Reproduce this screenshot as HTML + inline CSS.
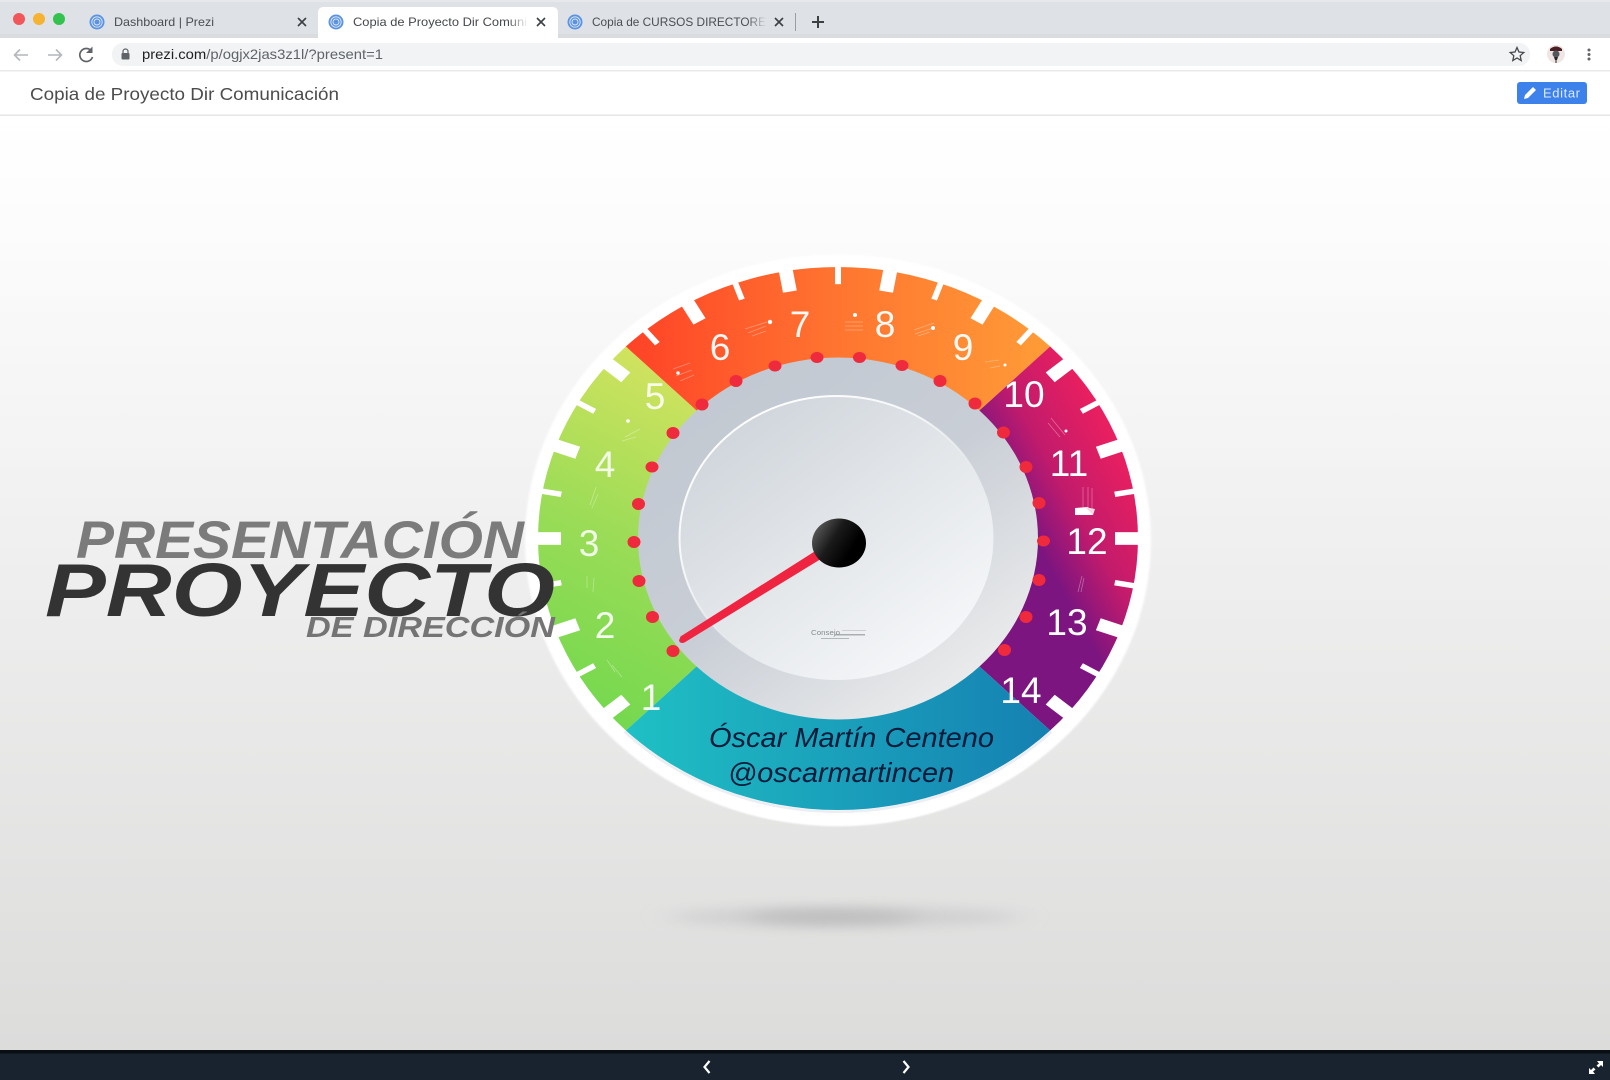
<!DOCTYPE html>
<html lang="es"><head><meta charset="utf-8"><title>Copia de Proyecto Dir Comunicación</title>
<style>html,body{margin:0;padding:0;width:1610px;height:1080px;overflow:hidden;background:#fff}svg{display:block}text{font-family:"Liberation Sans",sans-serif}</style>
</head><body>
<svg width="1610" height="1080" viewBox="0 0 1610 1080" xmlns="http://www.w3.org/2000/svg">
<defs>
<linearGradient id="bg" x1="0" y1="0" x2="0" y2="1"><stop offset="0" stop-color="#fff"/><stop offset=".12" stop-color="#fcfcfc"/><stop offset=".5" stop-color="#eeeeee"/><stop offset="1" stop-color="#dcdcdb"/></linearGradient>
<linearGradient id="gr" x1=".6" y1="0" x2=".4" y2="1"><stop offset="0" stop-color="#d2e35f"/><stop offset=".5" stop-color="#9bdc57"/><stop offset="1" stop-color="#72d84e"/></linearGradient>
<linearGradient id="or" x1="0" y1="0" x2="1" y2="0"><stop offset="0" stop-color="#ff4227"/><stop offset=".5" stop-color="#ff7530"/><stop offset="1" stop-color="#ff9c37"/></linearGradient>
<linearGradient id="mg" gradientUnits="userSpaceOnUse" x1="299" y1="-61" x2="192" y2="-8"><stop offset="0" stop-color="#e81f60"/><stop offset=".565" stop-color="#c21b6c"/><stop offset="1" stop-color="#7d1580"/></linearGradient>
<linearGradient id="bl" x1="0" y1="0" x2="1" y2="0"><stop offset="0" stop-color="#1fc0c4"/><stop offset="1" stop-color="#1580b2"/></linearGradient>
<linearGradient id="ring" x1=".1" y1=".1" x2=".8" y2=".95"><stop offset="0" stop-color="#c1c8d1"/><stop offset=".5" stop-color="#c9ced6"/><stop offset="1" stop-color="#eceded"/></linearGradient>
<linearGradient id="face" x1=".1" y1=".05" x2=".85" y2=".95"><stop offset="0" stop-color="#cdd3da"/><stop offset=".55" stop-color="#e5e8eb"/><stop offset="1" stop-color="#f6f8fa"/></linearGradient>
<linearGradient id="edge" x1=".1" y1=".1" x2=".6" y2=".75"><stop offset="0" stop-color="#fff"/><stop offset=".45" stop-color="#fff" stop-opacity=".8"/><stop offset=".85" stop-color="#fff" stop-opacity="0"/></linearGradient>
<linearGradient id="hub" x1=".05" y1=".2" x2=".75" y2=".6"><stop offset="0" stop-color="#5a5a5a"/><stop offset=".5" stop-color="#1a1a1a"/><stop offset="1" stop-color="#000"/></linearGradient>
<linearGradient id="fade" x1="0" y1="0" x2="1" y2="0"><stop offset="0" stop-color="#fff" stop-opacity="0"/><stop offset="1" stop-color="#fff"/></linearGradient>
<linearGradient id="fade2" x1="0" y1="0" x2="1" y2="0"><stop offset="0" stop-color="#dee1e6" stop-opacity="0"/><stop offset="1" stop-color="#dee1e6"/></linearGradient>
<filter id="b1" x="-5%" y="-5%" width="110%" height="110%"><feGaussianBlur stdDeviation="1"/></filter>
<filter id="b8" x="-30%" y="-200%" width="160%" height="500%"><feGaussianBlur stdDeviation="14 6"/></filter>
<g id="fav"><circle r="7.5" fill="#5b93e2"/><circle r="5.2" fill="none" stroke="#dbe7f8" stroke-width=".9"/><circle r="3" fill="none" stroke="#dbe7f8" stroke-width=".9"/></g>
</defs>

<!-- page background -->
<rect x="0" y="116" width="1610" height="934" fill="url(#bg)"/>

<!-- floor shadow -->
<ellipse cx="845" cy="917" rx="175" ry="10" fill="#d0d0d0" filter="url(#b8)"/>
<ellipse cx="832" cy="917" rx="85" ry="7" fill="#bdbdbd" filter="url(#b8)"/>

<!-- gauge -->
<g transform="translate(838 538.5) scale(1 .905)">
  <ellipse cy="2" rx="313" ry="316" fill="#fff" filter="url(#b1)"/>
  <path d="M212.13 212.13A300 300 0 0 1-212.13 212.13" fill="none" stroke="#d9dde8" stroke-width="3" opacity=".5" transform="scale(1.006)"/>
  <circle r="205" fill="url(#ring)"/>
  <path d="M-212.13-212.13A300 300 0 0 0-212.13 212.13L-141.42 141.42A200 200 0 0 1-141.42-141.42Z" fill="url(#gr)"/>
  <path d="M-212.13-212.13A300 300 0 0 1 212.13-212.13L141.42-141.42A200 200 0 0 0-141.42-141.42Z" fill="url(#or)"/>
  <path d="M212.13-212.13A300 300 0 0 1 212.13 212.13L141.42 141.42A200 200 0 0 0 141.42-141.42Z" fill="url(#mg)"/>
  <path d="M212.13 212.13A300 300 0 0 1-212.13 212.13L-141.42 141.42A200 200 0 0 0 141.42 141.42Z" fill="url(#bl)"/>
  <g fill="#fff">
    <rect x="-304" y="-7" width="27" height="14" transform="rotate(-40)"/>
    <rect x="-304" y="-3" width="23" height="6" transform="rotate(-30)"/>
    <rect x="-304" y="-7" width="27" height="14" transform="rotate(-20)"/>
    <rect x="-304" y="-3" width="23" height="6" transform="rotate(-10)"/>
    <rect x="-304" y="-7" width="27" height="14" transform="rotate(0)"/>
    <rect x="-304" y="-3" width="23" height="6" transform="rotate(10)"/>
    <rect x="-304" y="-7" width="27" height="14" transform="rotate(20)"/>
    <rect x="-304" y="-3" width="23" height="6" transform="rotate(30)"/>
    <rect x="-304" y="-7" width="27" height="14" transform="rotate(40)"/>
    <rect x="-304" y="-3" width="23" height="6" transform="rotate(50)"/>
    <rect x="-304" y="-7" width="27" height="14" transform="rotate(60)"/>
    <rect x="-304" y="-3" width="23" height="6" transform="rotate(70)"/>
    <rect x="-304" y="-7" width="27" height="14" transform="rotate(80)"/>
    <rect x="-304" y="-3" width="23" height="6" transform="rotate(90)"/>
    <rect x="-304" y="-7" width="27" height="14" transform="rotate(100)"/>
    <rect x="-304" y="-3" width="23" height="6" transform="rotate(110)"/>
    <rect x="-304" y="-7" width="27" height="14" transform="rotate(120)"/>
    <rect x="-304" y="-3" width="23" height="6" transform="rotate(130)"/>
    <rect x="-304" y="-7" width="27" height="14" transform="rotate(140)"/>
    <rect x="-304" y="-3" width="23" height="6" transform="rotate(150)"/>
    <rect x="-304" y="-7" width="27" height="14" transform="rotate(160)"/>
    <rect x="-304" y="-3" width="23" height="6" transform="rotate(170)"/>
    <rect x="-304" y="-7" width="27" height="14" transform="rotate(180)"/>
    <rect x="-304" y="-3" width="23" height="6" transform="rotate(190)"/>
    <rect x="-304" y="-7" width="27" height="14" transform="rotate(200)"/>
    <rect x="-304" y="-3" width="23" height="6" transform="rotate(210)"/>
    <rect x="-304" y="-7" width="27" height="14" transform="rotate(220)"/>
  </g>
</g>

<!-- inner face -->
<ellipse cx="836.5" cy="538" rx="157" ry="142" fill="url(#face)"/>
<ellipse cx="836.5" cy="538" rx="157" ry="142" fill="none" stroke="url(#edge)" stroke-width="2"/>

<!-- red dots -->
<g fill="#ee2a3c">
<ellipse cx="634" cy="542" rx="6.5" ry="6"/><ellipse cx="638.5" cy="504" rx="6.5" ry="6"/><ellipse cx="652" cy="467" rx="6.5" ry="5.5"/><ellipse cx="673" cy="433" rx="6.5" ry="6"/><ellipse cx="702" cy="404.5" rx="6.5" ry="6"/><ellipse cx="736" cy="381" rx="6.5" ry="6"/><ellipse cx="775" cy="366" rx="6.5" ry="5.5"/><ellipse cx="817" cy="357.5" rx="6.5" ry="5.5"/>
<ellipse cx="859.5" cy="357.5" rx="6.5" ry="5.5"/><ellipse cx="902" cy="365.5" rx="6.5" ry="5.5"/><ellipse cx="940" cy="381" rx="6.5" ry="6"/><ellipse cx="975" cy="403.5" rx="6.5" ry="6"/><ellipse cx="1003.5" cy="432.5" rx="6.5" ry="6"/><ellipse cx="1026" cy="467" rx="6.5" ry="6"/><ellipse cx="1039" cy="503" rx="6.5" ry="6"/><ellipse cx="1043.5" cy="541" rx="6.5" ry="5.5"/>
<ellipse cx="1039" cy="580" rx="6.5" ry="6"/><ellipse cx="1026" cy="617" rx="6.5" ry="6"/><ellipse cx="1004.5" cy="650" rx="6.5" ry="6"/>
<ellipse cx="639" cy="581" rx="6.5" ry="6"/><ellipse cx="652.5" cy="617" rx="6.5" ry="6"/><ellipse cx="673" cy="651" rx="6.5" ry="6"/>
</g>

<!-- tiny marks on the bands -->
<g fill="none" stroke="#fff" stroke-width=".8" opacity=".35">
<path d="M673 369l17-6M676 376l16-6M680 381l14-6M745 329l22-7M748 333l18-7M752 336l14-5M845 322l18 0M845 326l18 0M845 330l18 0M914 330l20-7M915 334l18-6M918 336l12-4M985 362l14-2M990 368l10-2M625 437l15-8M622 441l14-4M590 505l6-18M592 508l6-14M1051 418l14 17M1048 423l12 14M1083 487l0 24M1088 487l0 24M1092 488l0 22M1078 592l4-16M1081 592l3-14M607 660l8 12M612 665l10 12M587 588l0-12M593 592l1-14"/>
</g>
<g fill="#fff">
<circle cx="770" cy="322" r="2.2"/><circle cx="855" cy="315" r="2"/><circle cx="933" cy="328" r="2"/><circle cx="1005" cy="365" r="1.5"/><circle cx="628" cy="421" r="1.8"/>
<circle cx="678" cy="373" r="1.7"/><circle cx="1066" cy="431" r="1.5"/>
<path d="M1075 508l13-1 5 8-18 0z"/>
<path d="M1085 507l8 8 2-6z" fill="#f7d7e4"/>
</g>

<!-- needle -->
<path d="M680.5 636.5L824 545.5 829 554 684.5 642.5Q680 644 679 640.5Z" fill="#ef2440"/>

<!-- hub -->
<ellipse cx="839" cy="543" rx="27" ry="24.5" fill="url(#hub)"/>

<!-- tiny logo -->
<g fill="#8e9297">
<text x="811" y="635" font-size="7.5" textLength="29" lengthAdjust="spacingAndGlyphs" fill="#868a8f">Consejo</text>
<rect x="842" y="630" width="24" height="1" opacity=".35"/>
<rect x="835" y="634" width="30" height="1.5" opacity=".7"/>
<rect x="821" y="638" width="28" height="1" opacity=".6"/>
</g>

<!-- gauge numbers -->
<g font-size="37" fill="#fff" text-anchor="middle">
<text x="651" y="710" fill-opacity=".92">1</text>
<text x="605" y="638" fill-opacity=".9">2</text>
<text x="589" y="556" fill-opacity=".85">3</text>
<text x="605" y="477" fill-opacity=".85">4</text>
<text x="655" y="409" fill-opacity=".85">5</text>
<text x="720" y="360" fill-opacity=".95">6</text>
<text x="800" y="337" fill-opacity=".95">7</text>
<text x="885" y="337" fill-opacity=".95">8</text>
<text x="963" y="360" fill-opacity=".95">9</text>
<text x="1024" y="407">10</text>
<text x="1069" y="476">11</text>
<text x="1087" y="554">12</text>
<text x="1067" y="635">13</text>
<text x="1021" y="703">14</text>
</g>

<!-- name -->
<g font-style="italic" fill="#001c3a" font-size="27.5">
<text x="709" y="747" textLength="285" lengthAdjust="spacingAndGlyphs">Óscar Martín Centeno</text>
<text x="728" y="782" textLength="226" lengthAdjust="spacingAndGlyphs">@oscarmartincen</text>
</g>

<!-- title -->
<g font-weight="700" font-style="italic">
<text x="76" y="558" font-size="53" fill="#7b7b7b" textLength="448" lengthAdjust="spacingAndGlyphs">PRESENTACIÓN</text>
<text x="45" y="616" font-size="75" fill="#333333" textLength="510" lengthAdjust="spacingAndGlyphs">PROYECTO</text>
<text x="306" y="637" font-size="29" fill="#747474" textLength="249" lengthAdjust="spacingAndGlyphs">DE DIRECCIÓN</text>
</g>

<!-- browser chrome -->
<rect width="1610" height="38" fill="#dee1e6"/>
<rect y="34" width="1610" height="4" fill="#d9dbdf"/>
<rect width="1610" height="2" fill="#e6e8eb"/>
<circle cx="19" cy="19" r="6" fill="#f1565a"/><circle cx="39" cy="19" r="6" fill="#f5b233"/><circle cx="59" cy="19" r="6" fill="#34c24f"/>
<use href="#fav" x="97" y="22"/>
<text x="114" y="26" font-size="12" fill="#4a4d51" textLength="100" lengthAdjust="spacingAndGlyphs">Dashboard | Prezi</text>
<path d="M298 18l8 8M306 18l-8 8" stroke="#3c4043" stroke-width="1.6"/>
<path d="M318 38v-25q0-6 6-6h228q6 0 6 6v25z" fill="#fff"/>
<use href="#fav" x="336" y="22"/>
<text x="353" y="26" font-size="12" fill="#45484c" textLength="174" lengthAdjust="spacingAndGlyphs">Copia de Proyecto Dir Comuni</text>
<rect x="508" y="12" width="20" height="20" fill="url(#fade)"/>
<path d="M537 18l8 8M545 18l-8 8" stroke="#3c4043" stroke-width="1.6"/>
<use href="#fav" x="575" y="22"/>
<text x="592" y="26" font-size="12" fill="#4a4d51" textLength="174" lengthAdjust="spacingAndGlyphs">Copia de CURSOS DIRECTORE</text>
<rect x="747" y="12" width="20" height="20" fill="url(#fade2)"/>
<path d="M775 18l8 8M783 18l-8 8" stroke="#3c4043" stroke-width="1.6"/>
<rect x="795" y="13" width="1" height="18" fill="#9a9da2"/>
<path d="M818 16v12M812 22h12" stroke="#3c4043" stroke-width="2"/>

<rect y="38" width="1610" height="33" fill="#fff"/>
<rect x="112" y="43" width="1418" height="23" rx="11" fill="#f1f3f4"/>
<path d="M28 55H15M20 49.5L14.5 55l5.5 5.500" fill="none" stroke="#b4b7bb" stroke-width="1.6"/>
<path d="M48 55h13M56 49.5l5.5 5.5-5.5 5.5" fill="none" stroke="#b4b7bb" stroke-width="1.6"/>
<path d="M91 50.5A6.500 6.500 0 1 0 92.500 57" fill="none" stroke="#5f6368" stroke-width="1.7"/><path d="M92.500 46.5v6.500h-6.500z" fill="#5f6368"/>
<rect x="121.5" y="53" width="8" height="6.5" rx="1" fill="#5f6368"/><path d="M123 53.5v-2a2.5 2.5 0 0 1 5 0v2" fill="none" stroke="#5f6368" stroke-width="1.2"/>
<text x="142" y="59" font-size="14" fill="#5f6368" textLength="241" lengthAdjust="spacingAndGlyphs"><tspan fill="#202124">prezi.com</tspan>/p/ogjx2jas3z1l/?present=1</text>
<path d="M1517 47.5l2 4.5 4.8.5-3.600 3.2 1 4.8-4.200-2.500-4.200 2.500 1-4.800-3.600-3.200 4.800-.5z" fill="none" stroke="#45484c" stroke-width="1.3"/>
<circle cx="1556" cy="54" r="9" fill="#eee5e4"/><path d="M1550 49q6-5 12 0v2h-12z" fill="#4a1f24"/><circle cx="1556" cy="54" r="3.5" fill="#55585a"/><path d="M1554 57h4l-1 3h-.5v3h-1v-3h-.5z" fill="#25272a"/>
<circle cx="1589" cy="50" r="1.5" fill="#5f6368"/><circle cx="1589" cy="54.5" r="1.5" fill="#5f6368"/><circle cx="1589" cy="59" r="1.5" fill="#5f6368"/>
<rect y="70" width="1610" height="1.5" fill="#e9e9e9"/>

<!-- app header -->
<rect y="71.5" width="1610" height="43" fill="#fff"/>
<rect y="114.5" width="1610" height="1.5" fill="#e6e6e6"/>
<text x="30" y="100" font-size="17.5" fill="#4c4c4c" textLength="309" lengthAdjust="spacingAndGlyphs">Copia de Proyecto Dir Comunicación</text>
<rect x="1517" y="82" width="70" height="22" rx="3" fill="#3c82ea"/>
<path d="M1524 99l1-4 8-8 3 3-8 8z" fill="#fff"/>
<text x="1543" y="97.5" font-size="13" fill="#dfeafb" textLength="37" lengthAdjust="spacing">Editar</text>

<!-- bottom bar -->
<rect y="1050" width="1610" height="30" fill="#18232f"/>
<rect y="1050" width="1610" height="3.5" fill="#0a0f14"/>
<path d="M709.5 1061l-5 6 5 6" fill="none" stroke="#fff" stroke-width="2.2"/>
<path d="M903.5 1061l5 6-5 6" fill="none" stroke="#fff" stroke-width="2.2"/>
<path d="M1597 1061h6v6l-2-2-2.5 2.5-2-2 2.5-2zM1595 1074h-6v-6l2 2 2.5-2.5 2 2-2.5 2z" fill="#fff"/>
</svg>
</body></html>
